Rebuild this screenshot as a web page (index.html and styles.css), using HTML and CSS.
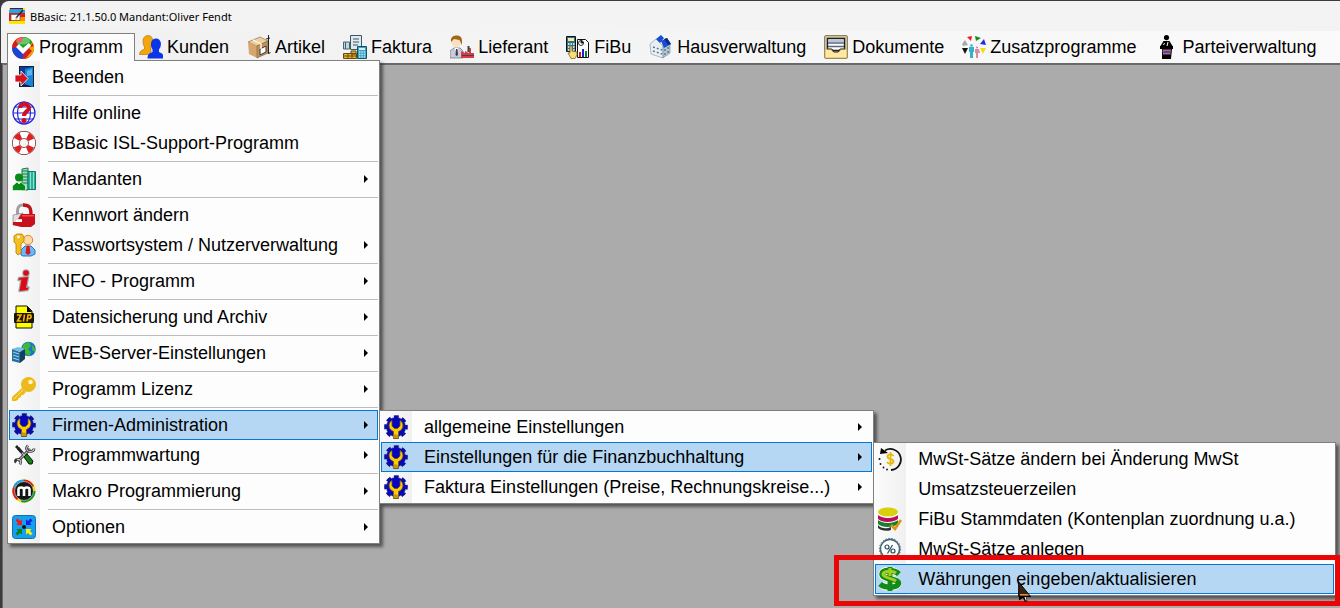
FILE: index.html
```html
<!DOCTYPE html>
<html lang="de">
<head>
<meta charset="utf-8">
<title>BBasic</title>
<link rel="stylesheet" href="styles.css">
</head>
<body>
<svg class="defs" aria-hidden="true">
  <symbol id="gear" viewBox="0 0 24 24">
    <circle cx="12" cy="12" r="10.300" fill="none" stroke="#0c0ca0" stroke-width="3" stroke-dasharray="4.800 3.290" stroke-dashoffset="2.400"/>
    <circle cx="12" cy="12" r="9.600" fill="#0606c0" stroke="#15157a" stroke-width=".6"/>
    <path d="M8 5.500C5 7 4 11.500 6.500 14.500c1 1 2 1.500 3 2V23.500h5V16.500c1-.5 2-1 3-2C20 11.500 19 7 16 5.500V11l-2.500 2.500h-3L8 11z" fill="#fc0" stroke="#6a5020" stroke-width=".8"/>
    <path d="M9.500 19l4.500 1v3H9.500z" fill="#c99700"/>
  </symbol>
</svg>
<div class="window">
  <header class="titlebar">
    <svg class="app-icon" viewBox="0 0 16 16" aria-hidden="true">
      <path fill="#ffe600" d="M0 0h16v16H0z"/><path fill="#1020b0" d="M1 0h13v1.500H1z"/><path fill="#1fa8e8" d="M0 2h16v3H0z"/><path fill="#e81818" d="M0 5h16v8H0z"/><path fill="#ff8a00" d="M11 9h5v4h-5z"/><path fill="#fff" stroke="#555" stroke-width=".7" d="M2 6.500h9v6H2z"/><path stroke="#222" stroke-width="1.400" d="M7 10l7-8"/><path fill="#f4a070" d="M6 12l1-3 2 2z"/>
    </svg>
    <h1 class="title">BBasic: 21.1.50.0 Mandant:Oliver Fendt</h1>
  </header>
  <nav class="menubar" aria-label="Hauptmenü">
    <div class="entry open">
      <button class="top">
        <svg class="icon" viewBox="0 0 24 24" aria-hidden="true"><circle cx="12" cy="12" r="11" fill="#f2c500"/><path fill="#17a51f" d="M12 1a11 11 0 0 1 9.500 5.500L12 16 4 8z"/><path fill="#e01818" d="M12 1A11 11 0 0 0 1 12l3 4 3-5-1-4 5-1z"/><path fill="#1845d8" d="M1 12a11 11 0 0 0 11 11V17L7 11z"/><path fill="#e01818" d="M12 23A11 11 0 0 0 23 12l-1-5-10 10z"/><path fill="#f1a800" d="M17 12l6-2a11 11 0 0 1-5 11l-6 2z"/><path fill="#d42020" d="M12 16l5-5 4 4-6 7-3 1z"/><ellipse cx="12" cy="5" rx="7" ry="3.500" fill="#fff" opacity=".35"/><path fill="#fff" d="M5 11l3-3 4 4 6-5 2 3-8 8z"/></svg>
        Programm
      </button>
      <ul class="menu">
        <li><button class="item"><svg class="icon" viewBox="0 0 24 24" aria-hidden="true"><path fill="#123" d="M7 1h15v21H7z"/><path fill="#0a3d9e" d="M8 2h13v18H8z"/><path fill="#1c84d8" d="M13 4l8-2v20l-8-3z"/><path fill="#58b5f0" d="M15 6l5-2v6l-5 1z"/><path fill="#d8121c" stroke="#fff" stroke-width=".8" d="M3 10h6V6l7 7.500L9 21v-4H3z"/></svg>Beenden</button></li>
        <li class="separator"></li>
        <li><button class="item"><svg class="icon" viewBox="0 0 24 24" aria-hidden="true"><g fill="none" stroke="#2222e0" stroke-width="1.200"><circle cx="12" cy="12" r="11" fill="#fff"/><ellipse cx="12" cy="12" rx="6.500" ry="11"/><path d="M1 12h22M3 6h18M3 18h18"/></g><path d="M8 7c0-5 9-5 9 0 0 3-5 3.500-5 8" fill="none" stroke="#d01020" stroke-width="4"/><circle cx="12" cy="19.500" r="2.600" fill="#d01020"/></svg>Hilfe online</button></li>
        <li><button class="item"><svg class="icon" viewBox="0 0 24 24" aria-hidden="true"><circle cx="12" cy="12" r="8" fill="none" stroke="#7d2020" stroke-width="7.800"/><circle cx="12" cy="12" r="8" fill="none" stroke="#fff" stroke-width="6.400"/><circle cx="12" cy="12" r="8" fill="none" stroke="#e02020" stroke-width="6.400" stroke-dasharray="5.500 7.066" stroke-dashoffset="-3.530"/></svg>BBasic ISL-Support-Programm</button></li>
        <li class="separator"></li>
        <li><button class="item submenu"><svg class="icon" viewBox="0 0 24 24" aria-hidden="true"><path fill="#9adfc0" stroke="#167a48" d="M10 2l6-1v22h-6z"/><path stroke="#167a48" d="M10 4h6M10 7h6M10 10h6M10 13h6M10 16h6"/><path fill="#2ab39a" stroke="#15766a" d="M16 4.500h7.500v18H16z"/><path stroke="#8be0d0" d="M18.500 5v17M21.500 5v17"/><circle cx="7" cy="10.500" r="4" fill="#078a16"/><path fill="#078a16" stroke="#fcfcfc" stroke-width=".6" d="M0.500 23.500v-4.500L5 15l2 2 2-2 4.500 4v4.500z"/></svg>Mandanten</button></li>
        <li class="separator"></li>
        <li><button class="item"><svg class="icon" viewBox="0 0 24 24" aria-hidden="true"><path d="M6 13C4 3 8 1.500 12 2" fill="none" stroke="#a0a0a4" stroke-width="3"/><path d="M11 2c7 0 8 3 8 10" fill="none" stroke="#c01018" stroke-width="3.400"/><path fill="#ddd" stroke="#777" stroke-width=".6" d="M1 12l10-2v12H1z"/><path fill="#c8101c" d="M9 11h14v10l-4 3H9L1 22v-3h9v-3H6z"/><path fill="#f04a50" d="M10 12h12v1.500H10z"/><path fill="#fff" d="M4 17h6v2H4z"/></svg>Kennwort ändern</button></li>
        <li><button class="item submenu"><svg class="icon" viewBox="0 0 24 24" aria-hidden="true"><circle cx="16" cy="7" r="4.700" fill="#ffd9a0" stroke="#d58a20"/><path fill="#6cb8f4" stroke="#2a72c8" d="M9 22v-5l4-4h6l4 4v4l-4 2H11z"/><path fill="#d81818" d="M14.500 13h3l1 7-2.500 2-2.500-2z"/><path fill="#f4c020" stroke="#b57808" stroke-width=".8" d="M2 3l3-2h5l2 3v4l-3 3v9l-3 2-2-2V11L2 9z"/><circle cx="6.500" cy="4" r="1.400" fill="#fff"/></svg>Passwortsystem / Nutzerverwaltung</button></li>
        <li class="separator"></li>
        <li><button class="item submenu"><svg class="icon" viewBox="0 0 24 24" aria-hidden="true"><g stroke="#aaa" stroke-width="2.500" stroke-linejoin="round" fill="#aaa"><circle cx="14" cy="4" r="2.500"/><path d="M7 9l9-1-2 11 2.500-.5-1 2.500-8 1 2-11.500-3 .5z"/></g><g fill="#d80c18"><circle cx="14" cy="4" r="2.800"/><path d="M7 9l9-1-2 11 2.500-.5-1 2.500-8 1 2-11.500-3 .5z"/></g></svg>INFO - Programm</button></li>
        <li class="separator"></li>
        <li><button class="item submenu"><svg class="icon" viewBox="0 0 24 24" aria-hidden="true"><path fill="#ff0" stroke="#111" d="M4 1h11l5 5v17H4z"/><path d="M15 1v6h5z"/><rect x="2" y="8" width="20" height="10" rx="1" fill="#1a1400"/><path fill="none" stroke="#ffb400" stroke-width="1.600" d="M5 10h4l-3.500 6h4M12.500 9.500l-1 7M15 16.500l1-6.500h2.500q1.500 2-.5 3.500h-2.500"/></svg>Datensicherung und Archiv</button></li>
        <li class="separator"></li>
        <li><button class="item submenu"><svg class="icon" viewBox="0 0 24 24" aria-hidden="true"><circle cx="16.500" cy="8" r="7.300" fill="#1676c8"/><path fill="#40b830" d="M12 3l5-2 2 4-3 3 3 3-2 4-5-3 1-4-3-1zM20 4l3 3v4l-3-2z"/><path fill="#78bde6" d="M0 8l6-2 8 2-5 3z"/><path fill="#276f9d" d="M0 8l8 3v11l-8-2z"/><path fill="#173f5d" d="M8 11l5-3v10l-5 4z"/><path stroke="#8ed0f2" stroke-width="1.200" d="M1 11l6 2M1 14l6 2M1 17l6 2"/></svg>WEB-Server-Einstellungen</button></li>
        <li class="separator"></li>
        <li><button class="item submenu"><svg class="icon" viewBox="0 0 24 24" aria-hidden="true"><path fill="#edb91b" d="M10 11l4 4-3 3-2 .5-.5 2-2 .5-.5 2L3.500 24H0v-4z"/><circle cx="16.500" cy="7.500" r="7.500" fill="#edb91b"/><circle cx="18.500" cy="5" r="2.300" fill="#fff6c8"/><path stroke="#ffe07a" d="M11 13L2 22"/></svg>Programm Lizenz</button></li>
        <li class="separator"></li>
        <li>
          <button class="item submenu active"><svg class="icon" aria-hidden="true"><use href="#gear"/></svg>Firmen-Administration</button>
          <ul class="menu nested">
            <li><button class="item submenu"><svg class="icon" aria-hidden="true"><use href="#gear"/></svg>allgemeine Einstellungen</button></li>
            <li>
              <button class="item submenu active"><svg class="icon" aria-hidden="true"><use href="#gear"/></svg>Einstellungen für die Finanzbuchhaltung</button>
              <ul class="menu nested last">
                <li><button class="item"><svg class="icon" viewBox="0 0 24 24" aria-hidden="true"><path d="M7 3.500A10.500 10.500 0 1 1 13 23" fill="none" stroke="#111" stroke-width="1.800"/><path d="M2 7l1-6 7 5z"/><g fill="#111"><circle cx="1.500" cy="12" r="1"/><circle cx="2.500" cy="17" r=".9"/><circle cx="5.500" cy="20.500" r=".9"/><circle cx="9" cy="22.500" r=".9"/></g><path d="M15.500 9C14 6.500 9.500 7 9.500 9.500c0 3.500 6 2 6 5 0 2.500-5 3-6.500.5M12.500 5v14" fill="none" stroke="#e5b90a" stroke-width="1.800"/></svg>MwSt-Sätze ändern bei Änderung MwSt</button></li>
                <li><button class="item"><span class="icon"></span>Umsatzsteuerzeilen</button></li>
                <li><button class="item"><svg class="icon" viewBox="0 0 24 24" aria-hidden="true"><path fill="#333" d="M0 18c3 4 9 4 13 2v3c-5 2-11 0-13-2z"/><path fill="#168030" d="M0 13c5 4 15 4 20 0v4c-5 4-16 4-20 0z"/><path fill="#fff" d="M0 10h20v3q-10 5-20 0z"/><path fill="#b80d58" d="M0 8c5 4 15 4 20 0v4c-5 4-16 4-20 0z"/><path fill="#fff" d="M0 5h20v3q-10 5-20 0z"/><ellipse cx="10" cy="5" rx="10" ry="4.500" fill="#d9cf0b"/><path d="M13 18l4 4 6-9" fill="none" stroke="#d99610" stroke-width="2.600"/></svg>FiBu Stammdaten (Kontenplan zuordnung u.a.)</button></li>
                <li><button class="item"><svg class="icon" viewBox="0 0 24 24" aria-hidden="true"><circle cx="12" cy="12" r="9.600" fill="#fff" stroke="#426b76" stroke-width="1.600"/><circle cx="12" cy="12" r="10.600" fill="none" stroke="#426b76" stroke-width="1" stroke-dasharray="1.500 1.500"/><g fill="none" stroke="#284f5a" stroke-width="1.200"><circle cx="9" cy="10" r="2"/><circle cx="15" cy="14" r="2"/><path d="M14.500 8l-5 8.500"/></g></svg>MwSt-Sätze anlegen</button></li>
                <li>
                  <button class="item active"><svg class="icon" viewBox="0 0 24 24" aria-hidden="true"><g fill="none" stroke="#fff" stroke-width="7"><path d="M20 7C16 2 5 2 4 7c0 6 16 4 16 9.500C19 21 7 22 3 17M12 1v22"/></g><path d="M21 7C16 2.500 4.500 2.500 4 7c0 6 16.500 4 16.500 9.500C19.500 21 7 21.500 2 17" fill="none" stroke="#138c17" stroke-width="5.600"/><path d="M12 0v24" stroke="#138c17" stroke-width="5"/><path d="M18 6C14 3 6 4 5 7c0 4 9 4 13 7M12 1v8" fill="none" stroke="#a5cf20" stroke-width="3"/></svg>Währungen eingeben/aktualisieren</button>
                  <span class="highlight-frame"></span>
                  <svg class="cursor" viewBox="0 0 13 21" aria-hidden="true"><path fill="#3b210f" stroke="#000" d="M.7 1v14.500h11.800z"/><path fill="#e88b3c" d="M2 13h8l1 1.500H2z"/><path d="M1 15h10l-3 1 1.500 4L7 21l-2-4-4 2.500z"/><path fill="#fff" d="M6.500 16h1.200l1 3.500h-1z"/></svg>
                </li>
              </ul>
            </li>
            <li><button class="item submenu"><svg class="icon" aria-hidden="true"><use href="#gear"/></svg>Faktura Einstellungen (Preise, Rechnungskreise...)</button></li>
          </ul>
        </li>
        <li><button class="item submenu"><svg class="icon" viewBox="0 0 24 24" aria-hidden="true"><path stroke="#222" stroke-width="3" d="M6 5l12 14M18 6L6 18"/><path stroke="#aaa" stroke-width="1.500" d="M6 5l12 14M18 6L6 18"/><path fill="#222" d="M3 4l2-2 6 7-2 1z"/><path fill="none" stroke="#333" stroke-width="2.600" d="M16 2.500c-3 3-1 6 2 6 2 0 4-1 4-3M8 21.500c2-3 0-6-3-5-2 0-2 2-1 3"/><path fill="none" stroke="#ccc" stroke-width="1.200" d="M16 2.500c-3 3-1 6 2 6 2 0 4-1 4-3M8 21.500c2-3 0-6-3-5"/><path fill="#148018" stroke="#111" d="M12 14l3-3 6 7-1 3h-3z"/></svg>Programmwartung</button></li>
        <li class="separator"></li>
        <li><button class="item submenu"><svg class="icon" viewBox="0 0 24 24" aria-hidden="true"><circle cx="12" cy="12" r="11.500" fill="#f0dc00"/><path fill="#1c9ee0" d="M12 12L1 8A11.500 11.500 0 0 1 12 .5z"/><path fill="#e02020" d="M12 12V.5A11.500 11.500 0 0 1 22 7zM12 12L1 8a11 11 0 0 0 4 13z"/><path fill="#10963a" d="M12 12l11.500 0A11.500 11.500 0 0 1 9 23z"/><circle cx="12" cy="12" r="9.400" fill="#151515" stroke="#fff" stroke-width=".5"/><path d="M6.500 17v-6.500q0-2 2.700-2T12 11v6M12 11q0-2.500 2.800-2.500t2.700 2V17" fill="none" stroke="#fff" stroke-width="2.600"/></svg>Makro Programmierung</button></li>
        <li class="separator"></li>
        <li><button class="item submenu"><svg class="icon" viewBox="0 0 24 24" aria-hidden="true"><rect x=".5" y=".5" width="23" height="23" rx="3" fill="#14a0ee" stroke="#1470a8"/><path fill="#f01818" d="M3.500 5.500l2-2L8 6l2-1.500V10H4.500L6 8z"/><path fill="#1020e8" d="M20.500 5.500l-2-2L16 6l-2-1.500V10h5.500L18 8z"/><path fill="#108018" d="M3.500 18.500l2 2L8 18l2 1.500V14H4.500L6 16z"/><path fill="#ffef00" d="M20.500 18.500l-2 2L16 18l-2 1.500V14h5.500L18 16z"/><circle cx="12" cy="12" r="2" fill="#101010"/></svg>Optionen</button></li>
      </ul>
    </div>
    <div class="entry"><button class="top"><svg class="icon" viewBox="0 0 24 24" aria-hidden="true"><g fill="#f2a50c" stroke="#a8700a" stroke-width=".6"><path d="M4 5q1-4.500 5-4.500t5 5q0 4-2 6v8H.5q0-3 2-4l3-1.500V12q-2-3-1.500-7z"/></g><path fill="#0b35e8" d="M12 8q1-4.500 5-4.500t5 5q0 4-2 6v2.500l3 1.500q1.500 1 1 5H8.500q0-4 2-5l3-1.500V14.500Q11.500 12 12 8z"/></svg>Kunden</button></div>
    <div class="entry"><button class="top"><svg class="icon" viewBox="0 0 24 24" aria-hidden="true"><path fill="#ecd0a3" stroke="#9b7246" stroke-width=".7" d="M1 7l12-5 8 4-11 5z"/><path fill="#d6a66c" d="M1 7l9 4v12l-8-4z"/><path fill="#c09061" stroke="#805c36" stroke-width=".6" d="M10 11l11-5v12l-11 5z"/><path fill="#fff" stroke="#333" d="M13 14l6-3v6l-6 3z"/><path fill="none" stroke="#222" d="M21.500 0v19l2-2M19 4l4-1"/><path fill="none" stroke="#fff1cf" stroke-width="1.500" d="M6 5l8 4v5"/></svg>Artikel</button></div>
    <div class="entry"><button class="top"><svg class="icon" viewBox="0 0 24 24" aria-hidden="true"><path fill="#dfeaf0" stroke="#405560" d="M7.500.5h11v14h-11z"/><path stroke="#405560" d="M10 4h6M10 7h6M10 10h5"/><path fill="#b8d8e5" stroke="#46656f" d="M.5 7h6v7h-6z"/><path stroke="#46656f" d="M2.500 7v7"/><path fill="#39a4c5" stroke="#164f68" d="M14.500 11.500h9v12h-9z"/><path stroke="#bce8f4" stroke-width="1.400" stroke-dasharray="1.400 1" d="M16 17h7M16 19.500h7M16 22h7"/><path fill="#d8eef4" d="M16 13h6v2h-6z"/><path fill="#e7b42c" stroke="#664a10" d="M.5 18.500h13v5H.500zM8 16h5v3H8z"/><path stroke="#664a10" d="M1 21h12M5 18v5M9 18v5"/></svg>Faktura</button></div>
    <div class="entry"><button class="top"><svg class="icon" viewBox="0 0 24 24" aria-hidden="true"><circle cx="6.500" cy="7" r="5" fill="#fae0c0"/><path fill="#a36516" d="M1 7Q0 1 6 0.500 12 0 12 6v4L9.500 5 4 4z"/><path fill="#c7ccd5" stroke="#6b6f78" stroke-width=".7" d="M0 23v-7l4-3h6l3 3v7z"/><path fill="#fff" d="M4.500 13h4L7 19z"/><path fill="#333d66" d="M6 14h1.500l.5 6-1.300 1L5.500 20z"/><path fill="#d63c48" d="M11 23v-7l4 2v-2l4 2V13h2v5h3v5z"/><path fill="#444" d="M17.500 11h2v6h-2zM12 20h12v1H12z"/></svg>Lieferant</button></div>
    <div class="entry"><button class="top"><svg class="icon" viewBox="0 0 24 24" aria-hidden="true"><path fill="#317486" stroke="#111" d="M.5 1.500h9v15h-9z"/><path fill="#f6e9a8" d="M2 3h6v3H2z"/><path stroke="#fff" stroke-width="1.600" stroke-dasharray="1.500 1" d="M2 9h7M2 12h7M2 15h7"/><path fill="#fff" stroke="#111" d="M11.500 4.500h8l3 3v15h-11z"/><circle cx="15" cy="8" r="2.500" fill="none" stroke="#333"/><path stroke="#333" d="M15 5v3h3"/><path fill="#d02020" d="M13 17h2v5h-2z"/><path fill="#2020d0" d="M16 14h2v8h-2z"/><path fill="#108020" d="M19 16h2v6h-2z"/><path fill="#f5dc7c" stroke="#8a6820" stroke-width=".8" d="M4 11h2v5l5 1v3l-2 3.500H5L2 18h2z"/></svg>FiBu</button></div>
    <div class="entry"><button class="top"><svg class="icon" viewBox="0 0 24 24" aria-hidden="true"><path fill="#e9f0f4" stroke="#8193a0" stroke-width=".6" d="M1 9l6-5 7 7v12L2 19z"/><path fill="#b4c7d4" stroke="#718596" stroke-width=".6" d="M14 11l7-3v10l-7 5z"/><path fill="#1a4ed0" d="M7 4l5-4 3 3-4 5zM12 6l6-3 4 6-7 4z"/><path fill="#0b2b87" d="M15 4l3-1 4 6-3 1z"/><path stroke="#59738a" stroke-width="1.400" stroke-dasharray="2 2" d="M4 12l9 3M4 16l9 3M16 14v7M19 12v7"/></svg>Hausverwaltung</button></div>
    <div class="entry"><button class="top"><svg class="icon" viewBox="0 0 24 24" aria-hidden="true"><rect x=".5" y=".5" width="23" height="23" rx="1.500" fill="#cfc29b" stroke="#8e8361"/><path fill="#fff" stroke="#222" stroke-width="1.400" d="M3.500 3.500h17v12h-17z"/><path fill="#b5c7da" d="M4 5h16v2H4z"/><path stroke="#57687c" stroke-width="1.400" d="M4 8h16M4 11.500h16"/><path fill="#ffe8a0" stroke="#b59b57" stroke-width=".7" d="M1 14h6l2 3h6l2-3h6v9H1z"/><path fill="none" stroke="#333" d="M3 14h5l2 3h4l2-3h5"/></svg>Dokumente</button></div>
    <div class="entry"><button class="top"><svg class="icon" viewBox="0 0 24 24" aria-hidden="true"><path fill="#e82020" d="M5 2l5-1-1 5z"/><path fill="#118f20" d="M13 1l6 2-5 3z"/><path fill="#2525f0" d="M18 9l4-5 2 6z"/><path fill="#f0dd18" d="M18 13h6l-3 6z"/><path fill="#111" d="M0 13h6l-3 6z"/><path fill="#a8a8b0" d="M0 9l3-4 3 5-5 1z"/><circle cx="9.500" cy="10.500" r="1.300" fill="#35b3c5"/><path fill="#35b3c5" d="M7 12h5v5h-1v6H8v-6H7z"/><circle cx="15" cy="12.500" r="1.100" fill="#d88aa2"/><path fill="#d88aa2" d="M13 14h4l1 4h-2v5h-2v-5h-1z"/></svg>Zusatzprogramme</button></div>
    <div class="entry"><button class="top"><svg class="icon" viewBox="0 0 24 24" aria-hidden="true"><circle cx="12.500" cy="2.600" r="2.600"/><path d="M6.500 11l3-5h6l3 5z"/><path stroke="#fff" d="M13 11l1-4M9.500 10l1-2"/><path d="M6 11h13v3H6zM8 14h10l-1 10H8z"/><path fill="#b56a79" d="M8.500 14.500h8.500l-.5 5H9z"/><path stroke="#2c35e0" stroke-width="1.500" d="M9.500 17h7"/></svg>Parteiverwaltung</button></div>
  </nav>
  <main class="workspace"></main>
</div>
</body>
</html>
```
FILE: styles.css
```css
* {
  box-sizing: border-box;
}

body {
  margin: 0;
  background: #3c3a3c;
  font-family: "Liberation Sans", Arial, sans-serif;
  font-size: 18px;
  color: #000;
}

.defs {
  display: none;
}

.window {
  display: flex;
  flex-direction: column;
  height: 100vh;
  padding: 1px 0 0 1px;
  overflow: hidden;
}

.titlebar {
  display: flex;
  align-items: center;
  gap: 5px;
  height: 30px;
  padding-left: 8px;
  border-top-left-radius: 8px;
  background: #f3f3f3;
}

.app-icon {
  width: 16px;
  height: 16px;
}

.title {
  margin: 0;
  font: 11px "Noto Sans", "Open Sans", sans-serif;
}

.menubar {
  display: flex;
  height: 32px;
  padding: 2px 0 0 6px;
  background: linear-gradient(90deg, #f0f0f0, #fafafa);
}

.entry {
  position: relative;
}

button {
  border: 0;
  background: none;
  color: inherit;
  font: inherit;
  text-align: left;
  white-space: nowrap;
}

.top {
  display: flex;
  align-items: center;
  gap: 4px;
  height: 28px;
  padding: 0 14px 0 4px;
}

.open .top {
  position: relative;
  z-index: 2;
  padding: 0 11px 0 3px;
  border: 1px solid #808080;
  border-bottom: 0;
  background: #fcfcfc;
}

.icon {
  flex: none;
  width: 24px;
  height: 24px;
}

.menu {
  position: absolute;
  top: 27px;
  left: 0;
  z-index: 1;
  margin: 0;
  padding: 1px;
  border: 1px solid #808080;
  background: linear-gradient(90deg, #fcfcfc, #f0f0f0 32px, #fdfdfd 32px);
  box-shadow: 3px 3px 3px rgba(0, 0, 0, 0.5);
  list-style: none;
}

.menu li {
  position: relative;
}

.menu.nested {
  top: 0;
  left: calc(100% + 1px);
}

.item {
  display: flex;
  align-items: center;
  gap: 16px;
  width: 100%;
  height: 30px;
  padding: 0 40px 0 3px;
}

.nested .item {
  padding-right: 42px;
}

.last .item {
  padding-right: 38px;
}

.menu .active {
  padding-left: 2px;
  border: 1px solid #0078d7;
  background: #b5d7f3;
}

.submenu::after {
  content: "";
  position: absolute;
  top: 11px;
  right: 10px;
  border: solid transparent;
  border-width: 4px 0 4px 4px;
  border-left-color: #000;
}

.separator {
  height: 6px;
  padding: 3px 0 2px 39px;
}

.separator::before {
  content: "";
  display: block;
  height: 1px;
  background: #bdbdbd;
}

.highlight-frame {
  position: absolute;
  inset: -9px -6px -12px -41px;
  border: 5px solid #ea0606;
  pointer-events: none;
}

.cursor {
  position: absolute;
  top: 17px;
  left: 143px;
  width: 13px;
  height: 21px;
}

.workspace {
  flex: 1;
  margin-left: 1px;
  border: solid #696969;
  border-width: 2px 0 0 1px;
  background: #ababab;
}
```
